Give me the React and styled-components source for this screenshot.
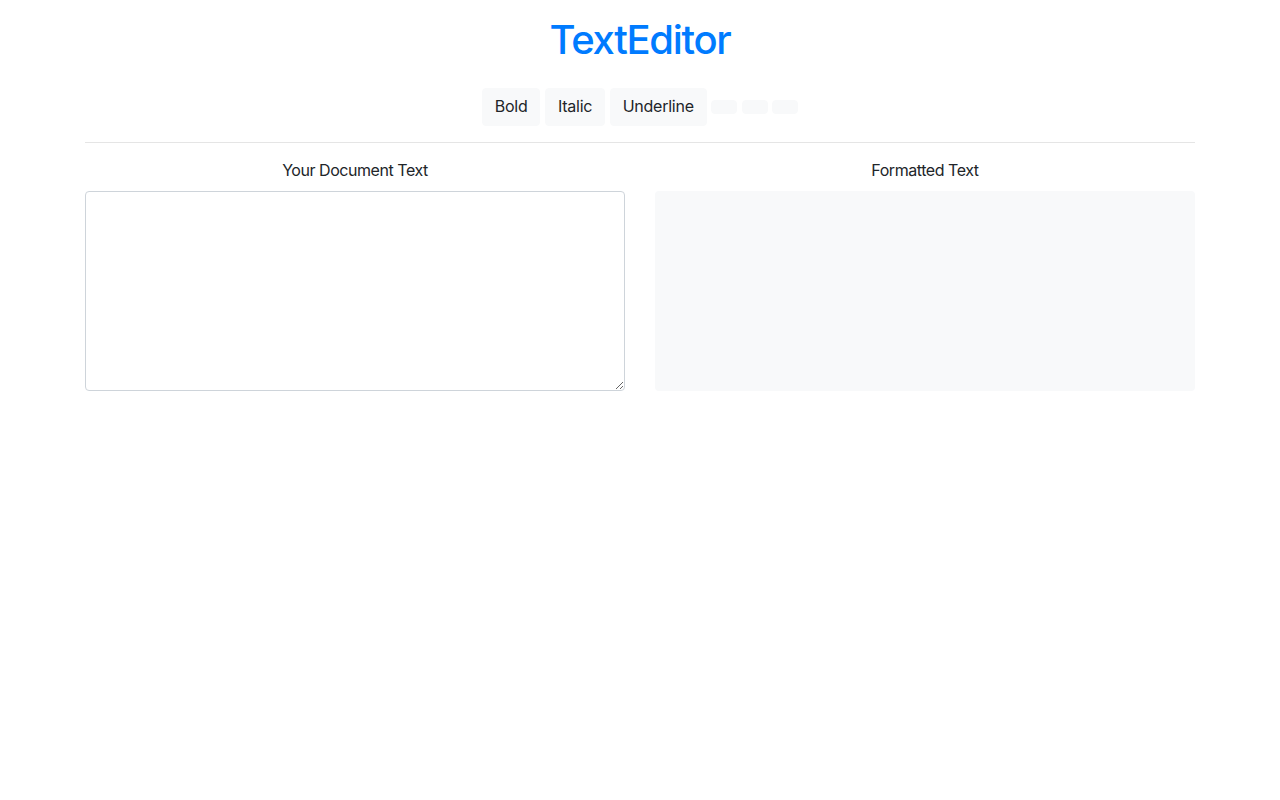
import React, { useState } from "react"
import styled, { createGlobalStyle } from "styled-components"

const GlobalStyle = createGlobalStyle`
  body {
    margin: 0;
    font-family: Inter, Roboto, "Helvetica Neue", Arial, sans-serif;
    font-size: 16px;
    line-height: 1.5;
    color: #212529;
    background: #fff;
  }
  * { box-sizing: border-box; }
`

const Container = styled.div`
  width: 1140px;
  margin: 0 auto;
  padding: 0 15px;
`

const Title = styled.h1`
  margin: 16px 0 24px;
  font-size: 40px;
  font-weight: 500;
  line-height: 1.2;
  letter-spacing: -1.3px;
  text-align: center;
  color: #007bff;
`

const Toolbar = styled.div`
  display: flex;
  justify-content: center;
  align-items: flex-start;
  gap: 4.5px;
`

const ToolButton = styled.button`
  margin-top: ${(p) => (p.$empty ? "12px" : "0")};
  padding: ${(p) => (p.$empty ? "0" : "5px 12px 7px")};
  font-family: inherit;
  font-size: 16px;
  line-height: ${(p) => (p.$empty ? "0" : "1.5")};
  letter-spacing: -0.25px;
  height: ${(p) => (p.$empty ? "14px" : "auto")};
  width: ${(p) => (p.$empty ? "26px" : "auto")};
  color: #212529;
  background: #f8f9fa;
  border: 1px solid #f8f9fa;
  border-radius: 4px;
  cursor: pointer;
  &:hover {
    background: #e2e6ea;
  }
`

const Divider = styled.hr`
  margin: 16px 0;
  border: 0;
  border-top: 1px solid rgba(0, 0, 0, 0.1);
`

const Row = styled.div`
  display: grid;
  grid-template-columns: 1fr 1fr;
  gap: 30px;
`

const Column = styled.div`
  display: flex;
  flex-direction: column;
`

const Label = styled.p`
  margin: -1px 0 9px;
  letter-spacing: -0.45px;
  text-align: center;
`

const Editor = styled.textarea`
  height: 200px;
  padding: 6px 12px;
  font-family: inherit;
  font-size: 16px;
  color: #495057;
  border: 1px solid #ced4da;
  border-radius: 4px;
  resize: vertical;
  outline: none;
  &:focus {
    border-color: #80bdff;
  }
`

const Preview = styled.div`
  height: 200px;
  padding: 12px;
  background: #f8f9fa;
  border-radius: 4px;
  white-space: pre-wrap;
`

const buttons = ["Bold", "Italic", "Underline", "", "", ""]

export default function App() {
  const [text, setText] = useState("")
  return (
    <>
      <GlobalStyle />
      <Container>
        <Title>TextEditor</Title>
        <Toolbar>
          {buttons.map((b, i) => (
            <ToolButton key={i} $empty={!b}>
              {b}
            </ToolButton>
          ))}
        </Toolbar>
        <Divider />
        <Row>
          <Column>
            <Label>Your Document Text</Label>
            <Editor value={text} onChange={(e) => setText(e.target.value)} />
          </Column>
          <Column>
            <Label>Formatted Text</Label>
            <Preview>{text}</Preview>
          </Column>
        </Row>
      </Container>
    </>
  )
}
